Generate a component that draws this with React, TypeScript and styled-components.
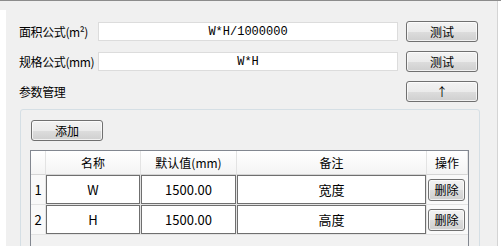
import styled, { createGlobalStyle } from "styled-components";

const GlobalStyle = createGlobalStyle`
  html, body {
    margin: 0;
    padding: 0;
    background: #f0f0f0;
  }
  * {
    box-sizing: border-box;
  }
`;

const Window = styled.div`
  display: flex;
  width: 501px;
  height: 246px;
  overflow: hidden;
  border-top: 1px solid #8c8c8c;
  background: #f0f0f0;
  font-family: "Noto Sans CJK SC", "Noto Sans", sans-serif;
  color: #000;
`;

const LeftEdge = styled.div`
  width: 6px;
  margin-top: 9px;
  background: #ffffff;
`;

const RightEdge = styled.div`
  width: 4px;
  border-left: 1px solid #d4d4d4;
  background: #ffffff;
`;

const Content = styled.div`
  flex: 1;
  display: flex;
  flex-direction: column;
  padding: 20px 0 0 13px;
`;

const FormGrid = styled.div`
  display: grid;
  grid-template-columns: 79px 308px 72px;
  row-gap: 9px;
  align-items: center;
`;

const Label = styled.label<{ $span?: number }>`
  grid-column: span ${(p) => p.$span ?? 1};
  font-size: 12px;
  line-height: 20px;
  letter-spacing: -0.4px;
  white-space: nowrap;
`;

const FormulaInput = styled.input`
  height: 19px;
  width: 300px;
  margin: 0;
  border: 1px solid #dcdcdc;
  background: #fff;
  font-family: "Liberation Mono", monospace;
  font-size: 12px;
  text-align: center;
  padding: 0;
  outline: none;
`;

const Button = styled.button<{ $w?: number; $h?: number }>`
  width: ${(p) => p.$w ?? 72}px;
  height: ${(p) => p.$h ?? 21}px;
  margin: 0;
  padding: 0;
  border: 1px solid #707070;
  border-radius: 3px;
  background: linear-gradient(#f2f2f2 0%, #ebebeb 50%, #dddddd 51%, #cfcfcf 100%);
  box-shadow: inset 0 0 0 1px rgba(255, 255, 255, 0.7);
  font-family: "Noto Sans CJK SC", sans-serif;
  font-size: 12px;
  line-height: 1;
  color: #000;
`;

const GroupBox = styled.div`
  margin: 7px 0 0 1px;
  width: 460px;
  height: 200px;
  flex-shrink: 0;
  border: 1px solid #d5dfe5;
  border-radius: 3px;
  padding: 10px 9px;
`;

const AddButton = styled(Button)`
  margin-left: 1px;
  display: block;
`;

const Table = styled.div`
  margin-top: 9px;
  width: 439px;
  height: 140px;
  border: 1px solid #828790;
  background: #f2f2f2;
  display: grid;
  grid-template-columns: 15px 95px 96px 190px 41px;
  grid-template-rows: 24px;
  grid-auto-rows: 30px;
  align-content: start;
`;

const HeadCell = styled.div`
  display: flex;
  align-items: center;
  justify-content: center;
  border-right: 1px solid #e3e3e3;
  border-bottom: 1px solid #d5d5d5;
  background: linear-gradient(#ffffff, #f4f4f4);
  font-size: 12px;
  white-space: nowrap;
  &:last-child {
    border-right: none;
  }
`;

const RowNum = styled.div`
  display: flex;
  align-items: center;
  justify-content: center;
  border-right: 1px solid #e3e3e3;
  border-bottom: 1px solid #e3e3e3;
  background: #f9f9f9;
  font-size: 13px;
`;

const Cell = styled.div`
  border-right: 1px solid #e3e3e3;
  border-bottom: 1px solid #e3e3e3;
  background: #f9f9f9;
  display: flex;
  align-items: center;
`;

const EditBox = styled.div`
  flex: 1;
  align-self: stretch;
  border: 1px solid #6f6f6f;
  background: #fff;
  display: flex;
  align-items: center;
  justify-content: center;
  font-size: 13px;
`;

const OpCell = styled(Cell)`
  border-right: none;
  padding-left: 1px;
`;

const params = [
  { name: "W", value: "1500.00", note: "宽度" },
  { name: "H", value: "1500.00", note: "高度" },
];

export default function App() {
  return (
    <>
      <GlobalStyle />
      <Window>
        <LeftEdge />
        <Content>
          <FormGrid>
            <Label>面积公式(m²)</Label>
            <FormulaInput readOnly value="W*H/1000000" />
            <Button>测试</Button>
            <Label>规格公式(mm)</Label>
            <FormulaInput readOnly value="W*H" />
            <Button>测试</Button>
            <Label $span={2}>参数管理</Label>
            <Button>↑</Button>
          </FormGrid>
          <GroupBox>
            <AddButton>添加</AddButton>
            <Table>
              <HeadCell />
              <HeadCell>名称</HeadCell>
              <HeadCell>默认值(mm)</HeadCell>
              <HeadCell>备注</HeadCell>
              <HeadCell>操作</HeadCell>
              {params.map((p, i) => [
                <RowNum key={`n${i}`}>{i + 1}</RowNum>,
                <Cell key={`a${i}`}>
                  <EditBox>{p.name}</EditBox>
                </Cell>,
                <Cell key={`b${i}`}>
                  <EditBox>{p.value}</EditBox>
                </Cell>,
                <Cell key={`c${i}`}>
                  <EditBox>{p.note}</EditBox>
                </Cell>,
                <OpCell key={`d${i}`}>
                  <Button $w={37} $h={22}>删除</Button>
                </OpCell>,
              ])}
            </Table>
          </GroupBox>
        </Content>
        <RightEdge />
      </Window>
    </>
  );
}
